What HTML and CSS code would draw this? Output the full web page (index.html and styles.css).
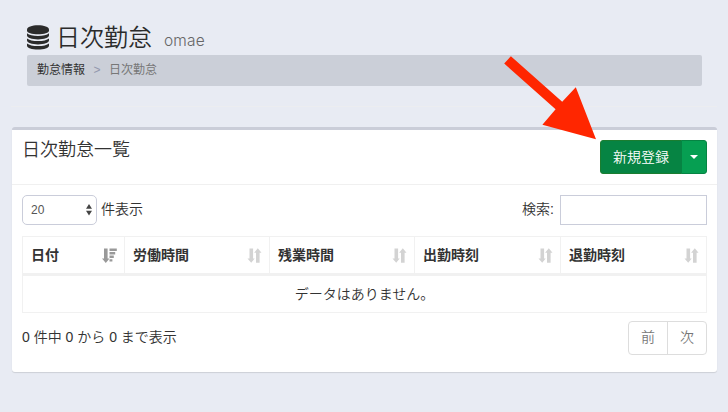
FILE: index.html
```html
<!DOCTYPE html>
<html lang="ja">
<head>
<meta charset="utf-8">
<title>日次勤怠</title>
<link rel="stylesheet" href="styles.css">
</head>
<body>
<svg class="defs" width="0" height="0" aria-hidden="true">
  <symbol id="sort" viewBox="0 0 14 15"><path d="M2 0.500h3.600v10h1.600L3.700 14.800 0 10.500h2zM8.500 14.800h3.600v-10h1.900L10.300 0.200 6.600 4.800h1.900z"/></symbol>
  <symbol id="sort-desc" viewBox="0 0 15 15"><path d="M2 0.500h3.600v10h1.900L3.800 15 0 10.500h2zM7.500 .5h7.300v2.400h-7.300zM7.500 4.100h5.700v2.300h-5.700zM7.500 7.600h4.300v2.300h-4.300zM7.500 11.200h2.900v2.300h-2.900z"/></symbol>
</svg>
<header class="page-header">
  <h1 class="title">
    <svg class="database" viewBox="0 0 22 25"><path d="M0 4.500C0 2 5 .3 11 .3s11 1.700 11 4.200v1C22 8 17 9.300 11 9.300S0 8 0 5.500z"/><path d="M0 8.300C2 10 6 10.900 11 10.900s9-.9 11-2.600v2.200c0 2.300-5 3.900-11 3.900s-11-1.600-11-3.900z"/><path d="M0 13.400C2 15.100 6 16 11 16s9-.9 11-2.600v2.200c0 2.300-5 3.900-11 3.900s-11-1.600-11-3.900z"/><path d="M0 18.500C2 20.200 6 21.100 11 21.100s9-.9 11-2.600v2.200c0 2.300-5 3.900-11 3.900s-11-1.600-11-3.900z"/></svg>
    <span>日次勤怠</span><small>omae</small>
  </h1>
  <nav class="breadcrumb"><a>勤怠情報</a><i>&gt;</i><span>日次勤怠</span></nav>
</header>
<hr class="rule">
<main class="box">
  <div class="box-header">
    <h2>日次勤怠一覧</h2>
    <div class="btn-group"><button class="btn">新規登録</button><button class="btn toggle" aria-label="メニュー"><span class="caret"></span></button></div>
  </div>
  <div class="box-body">
    <div class="controls">
      <label class="length"><span class="select">20<svg viewBox="0 0 6 12"><path d="M3 0l3 4.700H0zM3 11.500l3-4.700H0z"/></svg></span>件表示</label>
      <label class="search">検索:<input type="text"></label>
    </div>
    <table>
      <colgroup><col class="first"><col class="mid"><col class="mid"><col class="late"><col class="late"></colgroup>
      <thead><tr>
        <th><div class="th">日付<svg class="sorted"><use href="#sort-desc"/></svg></div></th>
        <th><div class="th">労働時間<svg><use href="#sort"/></svg></div></th>
        <th><div class="th">残業時間<svg><use href="#sort"/></svg></div></th>
        <th><div class="th">出勤時刻<svg><use href="#sort"/></svg></div></th>
        <th><div class="th">退勤時刻<svg><use href="#sort"/></svg></div></th>
      </tr></thead>
      <tbody><tr><td colspan="5">データはありません。</td></tr></tbody>
    </table>
    <div class="footer">
      <span class="info">0 件中 0 から 0 まで表示</span>
      <div class="pager"><a>前</a><a>次</a></div>
    </div>
  </div>
</main>
<svg class="arrow" viewBox="0 0 92 84"><path d="M6.900 0.200L58.200 45.700 71.800 31.300 92 83.200 38.400 68.700 51.600 53.300 0.200 7.500z"/></svg>
</body>
</html>
```
FILE: styles.css
```css
* { box-sizing: border-box; }
body {
  margin: 0;
  height: 412px;
  overflow: hidden;
  background: #e8ebf3;
  color: #333;
  font: 14px/20px "Liberation Sans", "Noto Sans CJK JP", sans-serif;
}
.defs { display: block; position: absolute; }
.page-header { padding: 20px 26px 0 27px; }
.title {
  display: flex;
  align-items: center;
  height: 35px;
  margin: 0;
  font-size: 24px;
  font-weight: 350;
  line-height: 35px;
  color: #2b2b2b;
}
.database { width: 22px; height: 25px; margin-right: 7px; fill: #2b2b2b; }
.title small {
  margin: 7px 0 0 12px;
  font: 300 15.500px/26px Inter, sans-serif;
  letter-spacing: .15px;
  color: #666;
}
.breadcrumb {
  display: flex;
  height: 31px;
  padding: 0 10px;
  border-radius: 2px;
  background: #cbcfd8;
  font-size: 12px;
  line-height: 30px;
  color: #777;
}
.breadcrumb a { color: #333; }
.breadcrumb i { width: 24px; font-style: normal; text-align: center; font-size: 12px; color: #9298ad; }
.rule { height: 1px; margin: 20px 11px 0; border: 0; background: #ecedf0; }
.box {
  height: 245px;
  margin: 20px 11px 0 12px;
  border-top: 3px solid #cacdd8;
  border-radius: 3px;
  background: #fff;
  box-shadow: 0 1px 1px rgba(0, 0, 0, .12);
}
.box-header {
  display: flex;
  justify-content: space-between;
  height: 55px;
  padding: 10px;
  border-bottom: 1px solid #f0f0f0;
}
h2 { margin: 0; font-size: 18px; font-weight: 350; line-height: 20px; color: #333; }
.btn-group { display: flex; height: 34px; }
.btn {
  width: 82px;
  padding: 0;
  border: 1px solid #1b7d30;
  border-radius: 3px 0 0 3px;
  background: #068443;
  color: #fff;
  font: 350 14px/30px "Liberation Sans", "Noto Sans CJK JP", sans-serif;
}
.toggle {
  display: flex;
  align-items: center;
  justify-content: center;
  width: 26px;
  margin-left: -1px;
  border-color: #068443;
  border-radius: 0 3px 3px 0;
  background: #069f52;
}
.caret { border: 4px solid transparent; border-top-color: #fff; border-bottom: 0; }
.box-body { padding: 10px; }
.controls { display: flex; justify-content: space-between; height: 30px; margin-bottom: 11px; font-weight: 350; line-height: 28px; }
.length, .search { display: flex; }
.select {
  display: flex;
  align-items: center;
  justify-content: space-between;
  width: 75px;
  height: 30px;
  margin-right: 4px;
  padding: 0 4px 0 8px;
  border: 1px solid #cacdda;
  border-radius: 5px;
  font-size: 12px;
  font-weight: 400;
  color: #555;
}
.select svg { width: 6px; height: 12px; fill: #444; }
.search input { width: 147px; height: 30px; margin: 0 0 0 6px; border: 1px solid #cacdda; background: #fff; }
table { width: 685px; table-layout: fixed; border-collapse: separate; border-spacing: 0; border: 1px solid #f1f1f1; border-right: 0; }
.first { width: 102px; }
.mid { width: 145px; }
.late { width: 146px; }
th { height: 39px; padding: 0 8px; border-right: 1px solid #f1f1f1; border-bottom: 3px solid #f1f1f1; text-align: left; font-weight: 700; }
.th { display: flex; align-items: center; justify-content: space-between; height: 36px; }
.th svg { width: 15px; height: 15px; margin-right: -1px; fill: #d3d3d3; }
.th .sorted { fill: #999; }
td { height: 36px; padding: 0; border-right: 1px solid #f1f1f1; text-align: center; font-weight: 350; }
.footer { display: flex; justify-content: space-between; padding-top: 8px; font-weight: 350; }
.info { line-height: 32px; }
.pager { display: flex; width: 79px; height: 34px; border: 1px solid #ddd; border-radius: 4px; line-height: 31px; text-align: center; color: #777; }
.pager a { flex: 1; }
.pager a + a { border-left: 1px solid #ddd; }
.arrow { position: absolute; left: 504px; top: 56px; width: 92px; height: 84px; fill: #ff2600; }
```
